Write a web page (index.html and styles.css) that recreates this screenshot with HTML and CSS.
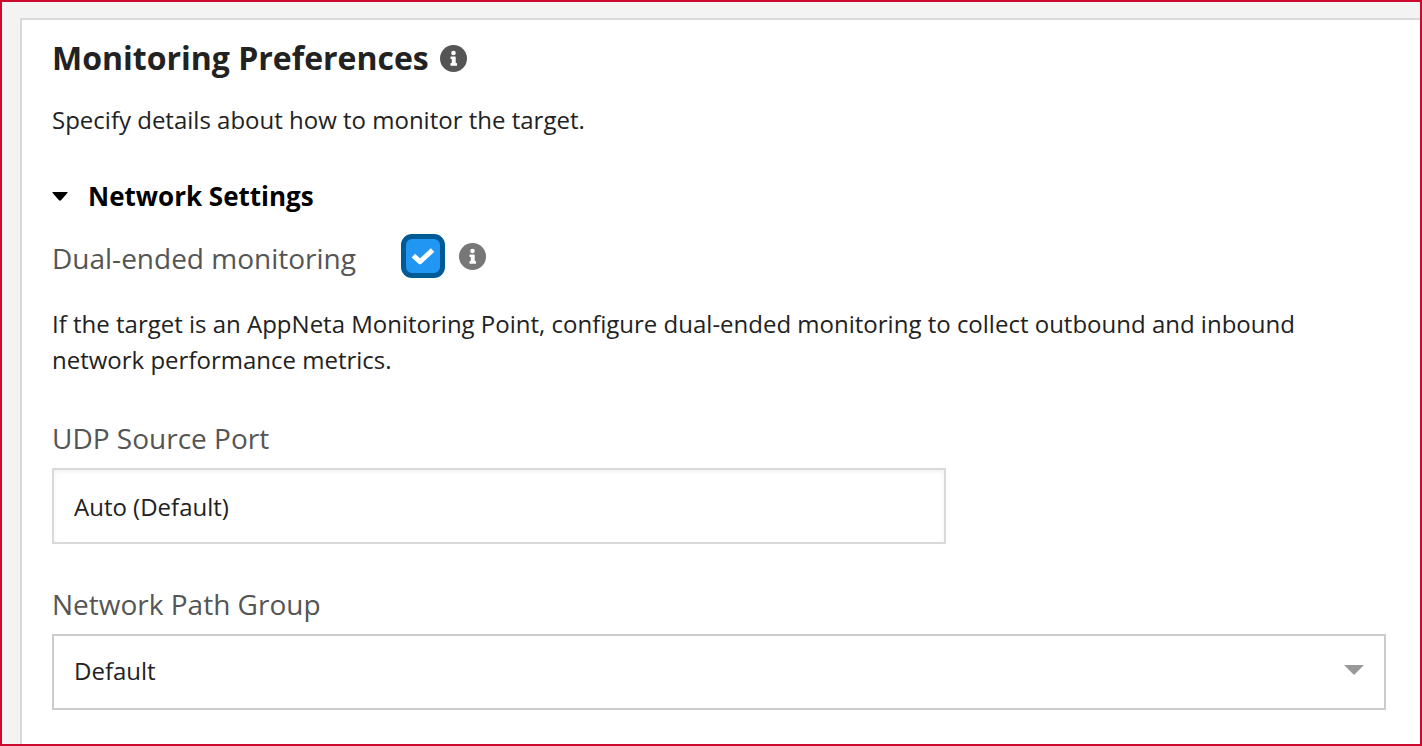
FILE: index.html
```html
<!DOCTYPE html>
<html lang="en">
<head>
<meta charset="utf-8">
<meta name="viewport" content="width=device-width, initial-scale=1">
<title>Monitoring Preferences</title>
<link rel="stylesheet" href="styles.css">
</head>
<body>
<main class="frame">
  <form class="panel">
    <header class="panel-header">
      <h1 class="title">Monitoring Preferences</h1>
      <button class="info" type="button" aria-label="About monitoring preferences">
        <svg class="info-icon" viewBox="0 0 27 27" aria-hidden="true"><circle cx="13.5" cy="13.5" r="13.5"/><circle class="info-mark" cx="13.5" cy="8" r="2.3"/><path class="info-mark" d="M11 11.5h4.2q.5 0 .5.5v6.1h.8q.5 0 .5.5v1.6q0 .5-.5.5H11q-.5 0-.5-.5v-1.6q0-.5.5-.5h.8v-4H11q-.5 0-.5-.5V12q0-.5.5-.5z"/></svg>
      </button>
    </header>
    <p class="text intro">Specify details about how to monitor the target.</p>

    <details class="section" open>
      <summary class="section-title">
        <svg class="section-arrow" viewBox="0 0 16 9" aria-hidden="true"><path d="M1 0h14q1 0 .6.8L9 8.3q-1 .9-2 0L.4.8Q0 0 1 0z"/></svg>
        Network Settings
      </summary>
      <div class="option">
        <label class="label option-label" for="dual">Dual-ended monitoring</label>
        <span class="check">
          <input class="check-box" type="checkbox" id="dual" checked>
          <svg class="check-mark" viewBox="0 0 24 18" aria-hidden="true"><path d="M2.4 8.6l6.6 6.2L21.6 3"/></svg>
        </span>
        <button class="info info-light" type="button" aria-label="About dual-ended monitoring">
          <svg class="info-icon" viewBox="0 0 27 27" aria-hidden="true"><circle cx="13.5" cy="13.5" r="13.5"/><circle class="info-mark" cx="13.5" cy="8" r="2.3"/><path class="info-mark" d="M11 11.5h4.2q.5 0 .5.5v6.1h.8q.5 0 .5.5v1.6q0 .5-.5.5H11q-.5 0-.5-.5v-1.6q0-.5.5-.5h.8v-4H11q-.5 0-.5-.5V12q0-.5.5-.5z"/></svg>
        </button>
      </div>
      <p class="text hint">If the target is an AppNeta Monitoring Point, configure dual-ended monitoring to collect outbound and inbound network performance metrics.</p>
      <div class="field">
        <label class="label" for="port">UDP Source Port</label>
        <input class="control port" type="text" id="port" value="Auto (Default)">
      </div>
      <div class="field">
        <label class="label" for="group">Network Path Group</label>
        <div class="select">
          <select class="control group" id="group"><option>Default</option></select>
          <svg class="select-arrow" viewBox="0 0 20 10" aria-hidden="true"><path d="M0 0h20L10 10z"/></svg>
        </div>
      </div>
    </details>
  </form>
</main>
</body>
</html>
```

FILE: styles.css
```css
* {
  box-sizing: border-box;
}

body {
  margin: 0;
  font-family: "Open Sans", "Noto Sans", sans-serif;
  font-size: 24px;
  line-height: 36px;
  color: #222;
}

.frame {
  display: flex;
  min-height: 100vh;
  padding: 16px 0 0 18px;
  border: 2px solid #cc092f;
  background: #f3f3f3;
}

.panel {
  flex: 1;
  min-width: 0;
  padding: 16px 34px 32px 30px;
  border: solid #d9d9d9;
  border-width: 2px 0 0 2px;
  background: #fff;
}

.panel-header {
  display: flex;
  align-items: center;
  gap: 11px;
}

.title {
  margin: 0;
  font-size: 32px;
  line-height: 44px;
  font-weight: 700;
}

.info {
  display: flex;
  padding: 0;
  border: 0;
  background: none;
  color: #555;
}

.info-light {
  color: #777;
}

.info-icon {
  width: 27px;
  height: 27px;
  fill: currentColor;
}

.info-mark {
  fill: #fff;
}

.text {
  margin: 0;
}

.intro {
  margin-top: 22px;
}

.section {
  margin-top: 40px;
}

.section-title {
  display: flex;
  align-items: center;
  gap: 20px;
  list-style: none;
  font-size: 26px;
  font-weight: 700;
  color: #000;
}

.section-arrow {
  width: 16px;
  height: 9px;
}

.option {
  display: flex;
  align-items: center;
  margin-top: 20px;
}

.label {
  display: block;
  font-size: 28px;
  line-height: 40px;
  color: #555;
}

.option-label {
  align-self: flex-end;
  margin-right: 45px;
}

.check {
  position: relative;
  display: flex;
  margin-right: 14px;
}

.check-box {
  appearance: none;
  width: 44px;
  height: 44px;
  margin: 0;
  border: 5px solid #005a96;
  border-radius: 11px;
  background: #2196f3;
}

.check-mark {
  position: absolute;
  inset: 0;
  width: 24px;
  height: 18px;
  margin: auto;
  fill: none;
  stroke: #fff;
  stroke-width: 5;
  stroke-linejoin: round;
  pointer-events: none;
}

.hint {
  margin-top: 28px;
}

.field {
  margin-top: 40px;
}

.control {
  display: block;
  height: 76px;
  padding: 0 20px;
  border: 2px solid #d9d9d9;
  border-radius: 0;
  background: #fff;
  font: inherit;
  color: #222;
}

.port {
  width: 67%;
  margin-top: 10px;
  box-shadow: inset 0 2px 4px rgba(0, 0, 0, 0.06);
}

.select {
  position: relative;
  margin-top: 10px;
}

.group {
  appearance: none;
  width: 100%;
  padding-bottom: 2px;
  border-color: #ccc;
}

.select-arrow {
  position: absolute;
  top: 31px;
  right: 22px;
  width: 20px;
  height: 10px;
  fill: #999;
  pointer-events: none;
}
```
